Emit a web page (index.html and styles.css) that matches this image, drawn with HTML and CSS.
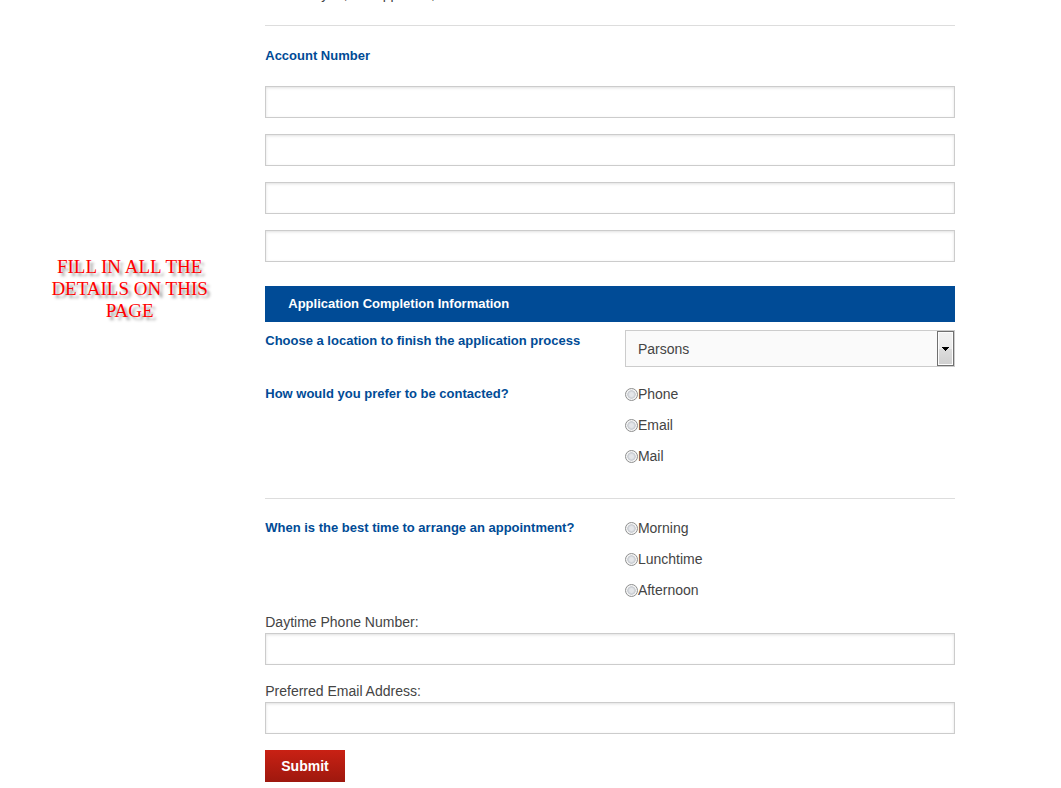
FILE: index.html
```
<!DOCTYPE html>
<html lang="en">
<head>
    <meta charset="UTF-8">
    <meta name="viewport" content="width=device-width, initial-scale=1.0">
    <title>Account application</title>
    <link rel="stylesheet" href="styles.css">
</head>
<body>

    <div class="container">
        <!-- Side note -->
        <aside class="note">
            <p>FILL IN ALL THE DETAILS ON THIS PAGE</p>
        </aside>

        <form class="application">
            <p class="intro">How are you, the applicant,</p>
            <hr>

            <!-- Account numbers -->
            <h2 class="question" id="account-label">Account Number</h2>
            <div class="accounts">
                <input type="text" class="text-field" aria-labelledby="account-label">
                <input type="text" class="text-field" aria-labelledby="account-label">
                <input type="text" class="text-field" aria-labelledby="account-label">
                <input type="text" class="text-field" aria-labelledby="account-label">
            </div>

            <h2 class="section-title">Application Completion Information</h2>

            <div class="row location">
                <label class="question" for="location">Choose a location to finish the application process</label>
                <div class="select-box">
                    <select id="location">
                        <option>Parsons</option>
                    </select>
                    <span class="select-arrow">
                        <svg width="7" height="4" viewBox="0 0 7 4" shape-rendering="crispEdges"><path d="M0 0h7v1H6v1H5v1H4v1H3V3H2V2H1V1H0z"/></svg>
                    </span>
                </div>
            </div>

            <div class="row" role="radiogroup" aria-labelledby="contact-label">
                <span class="question" id="contact-label">How would you prefer to be contacted?</span>
                <div class="options">
                    <label><input type="radio" name="contact">Phone</label>
                    <label><input type="radio" name="contact">Email</label>
                    <label><input type="radio" name="contact">Mail</label>
                </div>
            </div>

            <hr class="divider">

            <div class="row" role="radiogroup" aria-labelledby="time-label">
                <span class="question" id="time-label">When is the best time to arrange an appointment?</span>
                <div class="options">
                    <label><input type="radio" name="time">Morning</label>
                    <label><input type="radio" name="time">Lunchtime</label>
                    <label><input type="radio" name="time">Afternoon</label>
                </div>
            </div>

            <!-- Contact details -->
            <div class="field">
                <label for="phone">Daytime Phone Number:</label>
                <input type="tel" class="text-field" id="phone">
            </div>
            <div class="field">
                <label for="email">Preferred Email Address:</label>
                <input type="email" class="text-field" id="email">
            </div>

            <button type="submit" class="submit-btn">Submit</button>
        </form>
    </div>

</body>
</html>
```
FILE: styles.css
```
* {
    box-sizing: border-box;
}

body {
    margin: 0;
    background: #fff;
    color: #444;
    font-family: "Liberation Sans", Arial, sans-serif;
    font-size: 14px;
    line-height: 22px;
}

.container {
    display: grid;
    grid-template-columns: 25% 65%;
}

/* Side note */
.note {
    padding: 256px 40px 0 34px;
    color: #f00;
    font-family: "Liberation Serif", "Times New Roman", serif;
    font-size: 19px;
    text-align: center;
    text-shadow: 3px 3px 3px rgba(0, 0, 0, 0.4);
}

.note p {
    margin: 0;
}

/* Form */
.application {
    overflow: hidden;
    padding-bottom: 6px;
}

.intro {
    margin: -17px 0 20px;
}

hr {
    margin: 0;
    border: 0;
    border-top: 1px solid #ddd;
}

.question {
    margin: 0;
    color: #004b96;
    font-size: 13px;
    font-weight: bold;
}

h2.question {
    margin: 19px 0;
}

.text-field {
    display: block;
    width: 100%;
    height: 32px;
    padding: 4px 8px;
    border: 1px solid #ccc;
    border-radius: 0;
    background: #fff;
    box-shadow: inset 0 1px 3px rgba(0, 0, 0, 0.12);
    font: inherit;
}

.accounts {
    display: grid;
    gap: 16px;
}

.section-title {
    margin: 24px 0 8px;
    padding: 7px 23px;
    background: #004b96;
    color: #fff;
    font-size: 13px;
}

.row {
    display: grid;
    grid-template-columns: 1fr 330px;
    align-items: start;
}

.location {
    margin-bottom: 16px;
}

.select-box {
    display: flex;
    position: relative;
}

.select-box select {
    width: 100%;
    height: 37px;
    padding: 0 12px;
    border: 1px solid #ccc;
    border-radius: 0;
    background: #fafafa;
    color: #444;
    font: inherit;
    appearance: none;
}

.select-arrow {
    display: flex;
    align-items: center;
    justify-content: center;
    position: absolute;
    top: 1px;
    right: 1px;
    bottom: 1px;
    width: 17px;
    border: 1px solid #707070;
    background: linear-gradient(#f2f2f2, #ebebeb 50%, #ddd 50%, #cfcfcf);
    box-shadow: inset 0 0 0 1px #fcfcfc;
    pointer-events: none;
}

.options {
    display: grid;
    gap: 9px;
}

.options label {
    display: flex;
    align-items: center;
}

.options input {
    width: 13px;
    height: 13px;
    margin: 0;
    border: 1px solid #8e8f8f;
    border-radius: 50%;
    background: radial-gradient(circle, #e4e6e9 25%, #c4c8ce 50%, #f4f4f4 58%);
    appearance: none;
}

.options input:checked {
    background: radial-gradient(circle, #004b96 35%, #f4f4f4 45%);
}

.divider {
    margin: 31px 0 18px;
}

.field {
    margin: 10px 0 15px;
}

.field label {
    display: block;
}

.submit-btn {
    display: block;
    height: 32px;
    margin-top: 16px;
    padding: 0 16px;
    border: 0;
    background: linear-gradient(#c92114, #9e180e);
    color: #fff;
    font: bold 14px "Liberation Sans", Arial, sans-serif;
    cursor: pointer;
}
```
